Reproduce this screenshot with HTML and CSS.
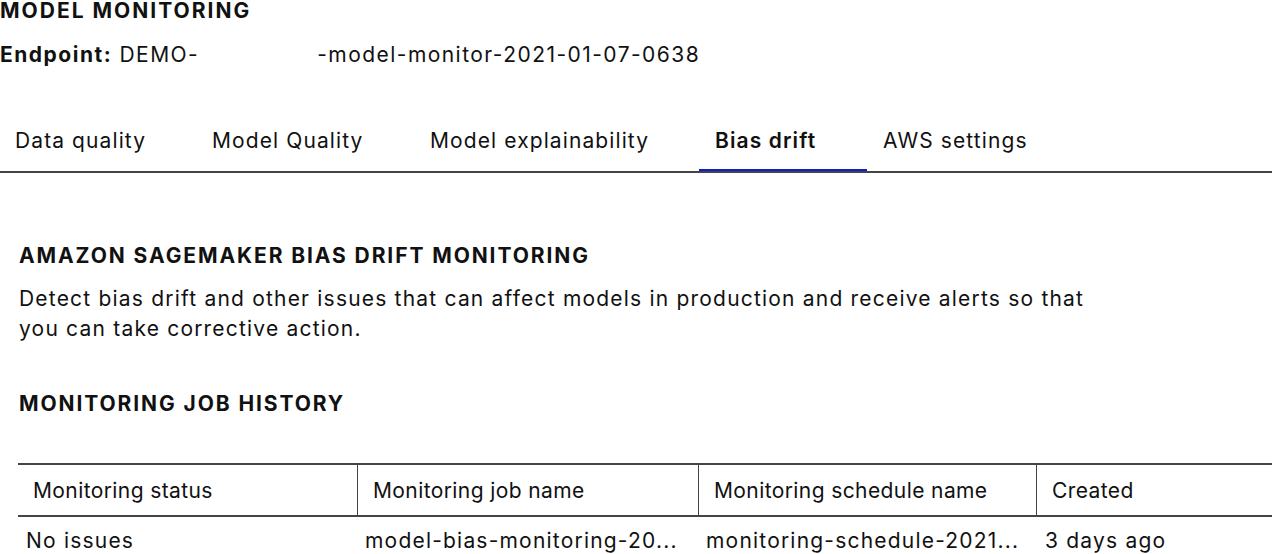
FILE: index.html
```html
<!DOCTYPE html>
<html>
<head>
<meta charset="utf-8">
<link rel="stylesheet" href="styles.css">
</head>
<body>
<div class="page">
  <h1 class="title">MODEL MONITORING</h1>
  <div class="endpoint"><b>Endpoint:</b> DEMO-<span class="redact"></span>-model-monitor-2021-01-07-0638</div>
  <nav class="tabs">
    <div class="tab t1">Data quality</div>
    <div class="tab t2">Model Quality</div>
    <div class="tab t3">Model explainability</div>
    <div class="tab t4 active">Bias drift</div>
    <div class="tab t5">AWS settings</div>
  </nav>
  <section class="content">
    <h2 class="heading">AMAZON SAGEMAKER BIAS DRIFT MONITORING</h2>
    <p class="desc">Detect bias drift and other issues that can affect models in production and receive alerts so that<br>you can take corrective action.</p>
    <h2 class="heading history">MONITORING JOB HISTORY</h2>
    <div class="table">
      <div class="row head">
        <div class="cell c1">Monitoring status</div>
        <div class="cell c2">Monitoring job name</div>
        <div class="cell c3">Monitoring schedule name</div>
        <div class="cell c4">Created</div>
      </div>
      <div class="row body">
        <div class="cell c1">No issues</div>
        <div class="cell c2">model-bias-monitoring-20...</div>
        <div class="cell c3">monitoring-schedule-2021...</div>
        <div class="cell c4">3 days ago</div>
      </div>
    </div>
  </section>
</div>
</body>
</html>
```
FILE: styles.css
```css
html, body {
  margin: 0;
  padding: 0;
  background: #fff;
}
body {
  font-family: Inter, "Noto Sans", sans-serif;
  color: #111;
  overflow: hidden;
}
.title {
  margin: 0;
  margin-top: 1px;
  font-size: 21px;
  font-weight: 700;
  line-height: 20px;
  letter-spacing: 2px;
}
.endpoint {
  font-size: 21px;
  line-height: 24px;
  margin-top: 22px;
  letter-spacing: 1.45px;
  white-space: nowrap;
}
.endpoint b { font-weight: 700; letter-spacing: 1.5px; }
.redact {
  display: inline-block;
  width: 118px;
}
.tabs {
  display: flex;
  margin-top: 56px;
  border-bottom: 2px solid #444;
  height: 48px;
}
.tab {
  font-size: 21px;
  line-height: 24px;
  letter-spacing: 1.1px;
  padding-top: 6px;
  padding-left: 16px;
  box-sizing: border-box;
  height: 48px;
  white-space: nowrap;
}
.t1 { width: 196px; padding-left: 15px; }
.t2 { width: 218px; }
.t3 { width: 285px; }
.t4 { width: 168px; font-weight: 600; border-bottom: 2px solid #0b1fd0; }
.t5 { flex: 1; }
.content {
  padding-left: 19px;
}
.heading {
  margin: 0;
  font-size: 21px;
  font-weight: 700;
  line-height: 24px;
  letter-spacing: 1.9px;
}
.content > .heading:first-child { margin-top: 71px; }
.desc {
  margin: 16px 0 0;
  font-size: 21px;
  line-height: 30px;
  letter-spacing: 1.2px;
  white-space: nowrap;
}
.history { margin-top: 48px; }
.table {
  margin-top: 47px;
  margin-left: -1px;
}
.row {
  display: flex;
}
.row.head {
  border-top: 2px solid #444;
  border-bottom: 2px solid #444;
  height: 54px;
  box-sizing: border-box;
}
.cell {
  font-size: 21px;
  line-height: 24px;
  white-space: nowrap;
  box-sizing: border-box;
}
.head .cell {
  padding: 14px 15px 0;
  letter-spacing: 0.4px;
  border-right: 1px solid #444;
  height: 50px;
}
.head .cell.c4 { border-right: none; }
.c1 { width: 340px; }
.c2 { width: 341px; }
.c3 { width: 338px; }
.c4 { flex: 1; }
.body .cell { padding: 12px 8px 0; letter-spacing: 1.2px; }
.body .c1 { padding-left: 8px; }
.body .c2, .body .c3 { padding-left: 7px; }
```
